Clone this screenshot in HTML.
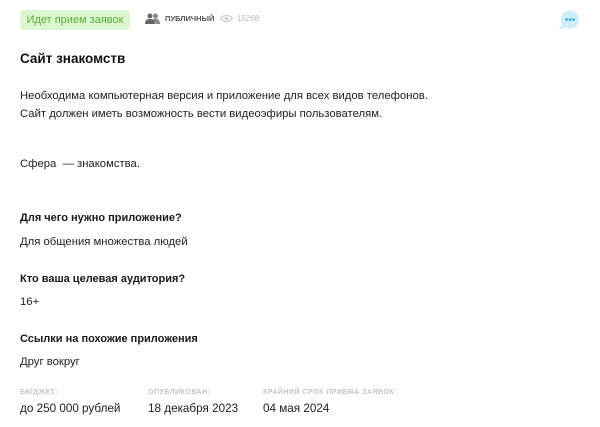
<!DOCTYPE html>
<html><head><meta charset="utf-8"><style>
body{margin:0;width:600px;height:427px;background:#fff;font-family:"Liberation Sans",sans-serif;color:#222;position:relative;overflow:hidden}
.a{position:absolute;white-space:nowrap}
.badge{left:20px;top:10px;width:110px;height:20px;background:#dcf8d2;border-radius:3px;color:#5aaa3a;font-size:11px;line-height:20px;text-align:center}
.t{font-size:11.3px}
.h{font-weight:bold;font-size:11px;color:#1a1a1a}
.b{font-size:11.7px}
.lbl{font-size:7px;color:#c4c4c4;letter-spacing:.5px;font-weight:bold}
</style></head><body>
<div class="a badge">Идет прием заявок</div>
<svg class="a" style="left:145px;top:13px" width="16" height="11" viewBox="0 0 16 11"><circle cx="5" cy="3" r="2.5" fill="#666"/><path d="M0 11c0-4 2-5 5-5s5 1 5 5z" fill="#666"/><circle cx="10.5" cy="3" r="2.5" fill="#888"/><path d="M8 6c3-1 7 0 7 5h-4z" fill="#888"/></svg>
<div class="a" style="left:165px;top:14px;font-size:7.5px;font-weight:bold;color:#555">ПУБЛИЧНЫЙ</div>
<svg class="a" style="left:220px;top:14px" width="13" height="9" viewBox="0 0 13 9"><path d="M0.5 4.5C3 0.5 10 0.5 12.5 4.5 10 8.5 3 8.5 0.5 4.5z" fill="none" stroke="#ccc" stroke-width="1.2"/><circle cx="6.5" cy="4.5" r="1.8" fill="#ccc"/></svg>
<div class="a" style="left:237px;top:14px;font-size:8px;color:#bbb">15268</div>
<svg class="a" style="left:558px;top:9px" width="22" height="22" viewBox="0 0 22 22"><circle cx="12" cy="10.5" r="9" fill="#cdeefb"/><path d="M4 15 L1 21 L9 18z" fill="#cdeefb"/><circle cx="8.5" cy="10.5" r="1.3" fill="#29a9e6"/><circle cx="12" cy="10.5" r="1.3" fill="#29a9e6"/><circle cx="15.5" cy="10.5" r="1.3" fill="#29a9e6"/></svg>
<div class="a" style="left:20px;top:51px;font-size:13.5px;font-weight:bold;color:#111">Сайт знакомств</div>
<div class="a t" style="left:20px;top:90px">Необходима компьютерная версия и приложение для всех видов телефонов.</div>
<div class="a t" style="left:20px;top:108px">Сайт должен иметь возможность вести видеоэфиры пользователям.</div>
<div class="a t" style="left:20px;top:158px">Сфера &nbsp;— знакомства.</div>
<div class="a h" style="left:20px;top:212px">Для чего нужно приложение?</div>
<div class="a t" style="left:20px;top:236px">Для общения множества людей</div>
<div class="a h" style="left:20px;top:273px">Кто ваша целевая аудитория?</div>
<div class="a t" style="left:20px;top:296px">16+</div>
<div class="a h" style="left:20px;top:333px">Ссылки на похожие приложения</div>
<div class="a t" style="left:20px;top:356px">Друг вокруг</div>
<div class="a lbl" style="left:20px;top:389px">БЮДЖЕТ:</div>
<div class="a lbl" style="left:148px;top:389px">ОПУБЛИКОВАН:</div>
<div class="a lbl" style="left:263px;top:389px">КРАЙНИЙ СРОК ПРИЕМА ЗАЯВОК:</div>
<div class="a b" style="left:20px;top:402px">до 250 000 рублей</div>
<div class="a b" style="left:148px;top:402px">18 декабря 2023</div>
<div class="a b" style="left:263px;top:402px">04 мая 2024</div>
</body></html>
